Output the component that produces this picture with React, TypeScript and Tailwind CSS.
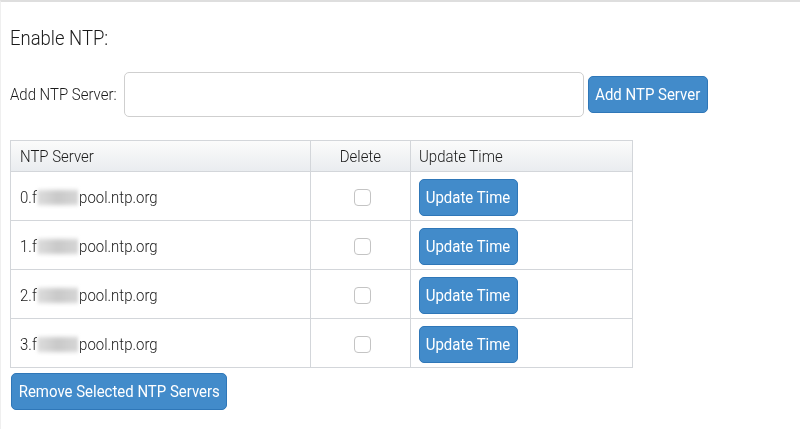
import type { ReactNode } from "react";

const font = { fontFamily: "Roboto, 'Liberation Sans', sans-serif" };

// the source page uses a narrow face; squeeze Roboto to match
function Narrow({ children, center = false }: { children: ReactNode; center?: boolean }) {
  return (
    <span
      className={
        "inline-block whitespace-nowrap scale-x-[0.88] " + (center ? "origin-center" : "origin-left")
      }
    >
      {children}
    </span>
  );
}

function BlueButton({ children, className = "" }: { children: ReactNode; className?: string }) {
  return (
    <button
      className={
        "flex h-[37px] items-center justify-center whitespace-nowrap rounded-[5px] border border-[#2f77b8] bg-[#428bca] text-[17px] font-normal leading-none text-white " +
        className
      }
    >
      <Narrow center>{children}</Narrow>
    </button>
  );
}

function Blur() {
  return (
    <span className="mx-[1px] inline-block h-[15px] w-[46px] translate-y-[2px] bg-gradient-to-r from-[#dcdcdc] via-[#c9c9c9] to-[#d6d6d6] blur-[2px]" />
  );
}

const servers = ["0.f", "1.f", "2.f", "3.f"];

export default function App() {
  return (
    <div
      style={font}
      className="h-[429px] w-[800px] overflow-hidden border-t-2 border-l border-t-[#dedede] border-l-[#efefef] bg-white pl-[9px] font-light text-[#1a1a1a]"
    >
      <div className="pt-[24px] text-[21px] leading-6">
        <Narrow>Enable NTP:</Narrow>
      </div>

      <div className="mt-[22px] flex items-center">
        <label className="w-[114px] text-[17px]">
          <Narrow>Add NTP Server:</Narrow>
        </label>
        <input className="h-[45px] w-[460px] rounded-[5px] border border-[#cfcfcf] bg-white outline-none" />
        <BlueButton className="ml-[4px] w-[120px]">Add NTP Server</BlueButton>
      </div>

      <table className="mt-[23px] w-[623px] border-collapse border border-[#d3d6da] text-[17px]">
        <thead>
          <tr className="h-[31px] bg-gradient-to-b from-[#fbfbfb] to-[#e9ecef]">
            <th className="w-[300px] border border-[#d3d6da] px-[9px] pt-[2px] text-left font-light">
              <Narrow>NTP Server</Narrow>
            </th>
            <th className="w-[100px] border border-[#d3d6da] pt-[2px] text-center font-light">
              <Narrow center>Delete</Narrow>
            </th>
            <th className="border border-[#d3d6da] px-[8px] pt-[2px] text-left font-light">
              <Narrow>Update Time</Narrow>
            </th>
          </tr>
        </thead>
        <tbody>
          {servers.map((s) => (
            <tr key={s} className="h-[49px]">
              <td className="border border-[#d3d6da] px-[9px] pt-[3px]">
                <Narrow>
                  {s}
                  <Blur />
                  pool.ntp.org
                </Narrow>
              </td>
              <td className="border border-[#d3d6da] pt-[3px]">
                <div className="mx-auto h-[17px] w-[17px] translate-x-[2px] rounded-[4px] border border-[#c4c4c4] bg-white" />
              </td>
              <td className="border border-[#d3d6da] px-[8px] pt-[3px]">
                <BlueButton className="w-[99px]">Update Time</BlueButton>
              </td>
            </tr>
          ))}
        </tbody>
      </table>

      <BlueButton className="ml-[1px] mt-[5px] w-[216px]">Remove Selected NTP Servers</BlueButton>
    </div>
  );
}
